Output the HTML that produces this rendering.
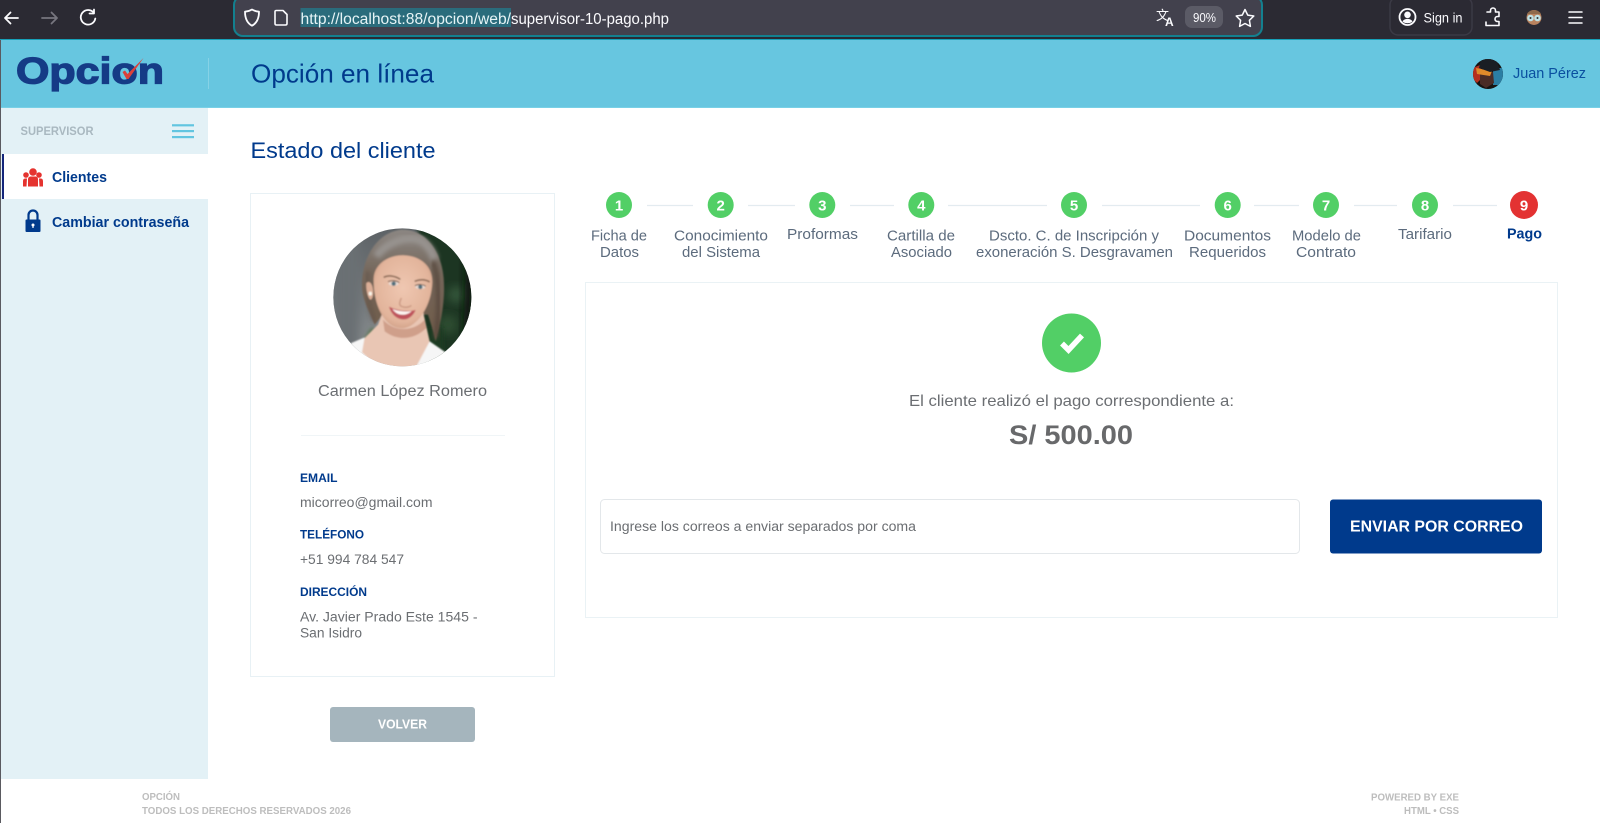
<!DOCTYPE html>
<html lang="es"><head><meta charset="utf-8"><title>Opción en línea</title>
<style>
html,body{margin:0;padding:0;width:1600px;height:823px;overflow:hidden;background:#fff}
svg{display:block}
text{font-family:"Liberation Sans",sans-serif}
.g{fill:#6b6e72}
.s{fill:#5c6b7d}
.b{fill:#003a8c;font-weight:700}
</style></head><body>
<svg width="1600" height="823" viewBox="0 0 1600 823" xmlns="http://www.w3.org/2000/svg">
<defs>
<clipPath id="cp"><circle cx="208" cy="208" r="207"/></clipPath>
<clipPath id="ca"><circle cx="1488" cy="74" r="15"/></clipPath>
<filter id="bl" x="-20%" y="-20%" width="140%" height="140%"><feGaussianBlur stdDeviation="6"/></filter>
<filter id="bl2" x="-30%" y="-30%" width="160%" height="160%"><feGaussianBlur stdDeviation="14"/></filter>
<filter id="bl3" x="-10%" y="-10%" width="120%" height="120%"><feGaussianBlur stdDeviation="2.200"/></filter>
<linearGradient id="gb" x1="0" y1="0" x2="0" y2="1"><stop offset="0" stop-color="#5d6266"/><stop offset=".55" stop-color="#767b7e"/><stop offset="1" stop-color="#93989a"/></linearGradient>
<linearGradient id="hr" x1="0" y1="0" x2="0" y2="1"><stop offset="0" stop-color="#8b8682"/><stop offset=".4" stop-color="#74665a"/><stop offset="1" stop-color="#6f5a48"/></linearGradient>
<radialGradient id="fc" cx=".5" cy=".45" r=".62"><stop offset="0" stop-color="#efc7b1"/><stop offset=".75" stop-color="#e2b49b"/><stop offset="1" stop-color="#c99880"/></radialGradient>
</defs>

<!-- browser toolbar -->
<rect width="1600" height="39" fill="#2b2a33"/>
<rect y="39" width="1600" height="1" fill="#17a0b8"/>
<rect x="234" y="-4" width="1028" height="40" rx="9" fill="#42414d" stroke="#13808f" stroke-width="2"/>
<g fill="none" stroke="#fbfbfe" stroke-width="1.800" stroke-linecap="round" stroke-linejoin="round">
<path d="M18 18H5M10.500 12.500 5 18l5.500 5.500"/>
<path d="M57 18H42M51.500 12.500 57 18l-5.500 5.500" stroke="#77767f"/>
<path d="M94 13.500V9.500M94 13.500h-4.500M94 13A7.300 7.300 0 1 0 95.300 18.500"/>
<path d="M252 9.500c2.500 1.500 4.500 2 7 2.200 0 6-1.500 11-7 14-5.500-3-7-8-7-14 2.500-.2 4.500-.7 7-2.200z"/>
<path d="M276.500 10.500h6.500l4 4v9c0 1-.5 1.500-1.500 1.500h-9c-1 0-1.500-.5-1.500-1.500v-12c0-1 .5-1 1.500-1z" stroke-width="1.600"/>
<path d="M1245 9.500l2.700 5.600 6.100.9-4.400 4.300 1 6.100-5.400-2.900-5.400 2.900 1-6.100-4.400-4.300 6.100-.9z" stroke-width="1.500"/>
<circle cx="1407.500" cy="17" r="8"/>
<path d="M1487 12h3.500v-1.500a2.500 2.500 0 0 1 5 0V12h3.500v4.500h-1.500a2.500 2.500 0 0 0 0 5h1.500v4h-13v-3.500" stroke-width="1.600"/>
<path d="M1569 12h13M1569 17.500h13M1569 23h13" stroke-width="1.500"/>
</g>
<circle cx="1407.500" cy="14.800" r="3.300" fill="#fbfbfe"/>
<path d="M1402.500 21.500c1-1.800 3-2.600 5-2.600s4 .8 5 2.600c-1.400 1.200-3.100 1.800-5 1.800s-3.600-.6-5-1.800z" fill="#fbfbfe"/>
<rect x="300.500" y="8" width="210.500" height="19" fill="#2a6c7c"/>
<text x="300.500" y="24" font-size="15.500" fill="#e6f4f6" textLength="210.500" lengthAdjust="spacingAndGlyphs">http://localhost:88/opcion/web/</text>
<text x="511" y="24" font-size="15.500" fill="#fbfbfe" textLength="158" lengthAdjust="spacingAndGlyphs">supervisor-10-pago.php</text>
<text x="1156" y="20" font-size="13" fill="#fbfbfe">文</text>
<text x="1165" y="26" font-size="12" font-weight="700" fill="#fbfbfe">A</text>
<rect x="1185" y="6" width="38" height="22" rx="7" fill="#5b5b66"/>
<text x="1193" y="22" font-size="12.500" fill="#fbfbfe" textLength="23" lengthAdjust="spacingAndGlyphs">90%</text>
<rect x="1390" y="-3" width="82" height="38" rx="8" fill="none" stroke="#3b3a45" stroke-width="1.500"/>
<text x="1423.500" y="22.500" font-size="14" fill="#fbfbfe" textLength="39" lengthAdjust="spacingAndGlyphs">Sign in</text>
<circle cx="1534" cy="17.500" r="7.500" fill="#b9835f"/>
<path d="M1527 14c2-5 12-5 14 0z" fill="#8e6a4c"/>
<circle cx="1530.500" cy="18" r="3.300" fill="#bfe2e6"/><circle cx="1537.500" cy="18" r="3.300" fill="#bfe2e6"/>
<circle cx="1530.500" cy="18" r="1" fill="#333"/><circle cx="1537.500" cy="18" r="1" fill="#333"/>

<!-- header -->
<rect y="40" width="1600" height="68" fill="#67c6e0"/>
<rect y="107" width="1600" height="1" fill="#78d0e6"/>
<text x="16" y="83.500" font-size="37" font-weight="700" fill="#153b86" stroke="#153b86" stroke-width="1.300" textLength="148" lengthAdjust="spacingAndGlyphs">Opcion</text>
<path d="M122.500 72L125 70.500L127.500 74L143.500 58L128.500 79L126.500 79z" fill="#d9403a"/>
<rect x="208" y="58" width="1" height="31" fill="#86d2e6"/>
<text x="251" y="82.500" font-size="26" fill="#003a8c" textLength="183" lengthAdjust="spacingAndGlyphs">Opción en línea</text>
<g clip-path="url(#ca)">
<rect x="1473" y="59" width="30" height="30" fill="#171311"/>
<path d="M1473 68l7-3 3 12-6 6-4-4z" fill="#b5301f"/>
<path d="M1493 68l10 0v17h-10z" fill="#2b7ea3"/>
<path d="M1480 74l13-2 1 11-8 5-6-4z" fill="#4a2c26"/>
<path d="M1476 68l16 3-2 5-13-2z" fill="#e08a2a"/>
<path d="M1481 59h15l4 11-10 2-11-4z" fill="#1a1e24"/>
</g>
<text x="1513" y="78" font-size="14.500" fill="#0a50a0" textLength="73" lengthAdjust="spacingAndGlyphs">Juan Pérez</text>

<!-- sidebar -->
<rect x="0" y="108" width="208" height="671" fill="#e3f1f6"/>
<rect x="0" y="40" width="1" height="783" fill="#5a5a60"/>
<text x="20.500" y="135" font-size="12" font-weight="700" fill="#a9b8c0" textLength="73" lengthAdjust="spacingAndGlyphs">SUPERVISOR</text>
<g fill="#62c5e0"><rect x="172" y="124.200" width="22" height="2.200"/><rect x="172" y="130" width="22" height="2.200"/><rect x="172" y="136" width="22" height="2.200"/></g>
<rect x="2" y="154" width="206" height="45" fill="#fff"/>
<rect x="2" y="154" width="2" height="45" fill="#14267a"/>
<g fill="#e5332f">
<circle cx="33" cy="172" r="3.800"/><circle cx="26" cy="175" r="2.800"/><circle cx="39" cy="175" r="2.800"/>
<path d="M28 186.500v-7c0-2 1-3 3-3h4c2 0 3 1 3 3v7z"/>
<path d="M23 186.500v-5c0-2 .7-3 2.500-3h1.500l-.5 8zM43 186.500v-5c0-2-.7-3-2.500-3H39l.5 8z"/>
</g>
<path d="M28.500 220v-5a4.500 4.500 0 0 1 9 0v5" fill="none" stroke="#003a8c" stroke-width="2.200"/>
<rect x="25.500" y="219.500" width="15" height="12.500" rx="1" fill="#003a8c"/>
<circle cx="33" cy="225" r="1.500" fill="#fff"/><rect x="32.400" y="225" width="1.200" height="3" fill="#fff"/>
<text x="52" y="182" font-size="14.500" font-weight="700" fill="#003a8c" textLength="55" lengthAdjust="spacingAndGlyphs">Clientes</text>
<text x="52" y="227" font-size="14.500" font-weight="700" fill="#003a8c" textLength="137" lengthAdjust="spacingAndGlyphs">Cambiar contraseña</text>

<!-- page title -->
<text x="250.500" y="158" font-size="22.500" fill="#003a8c" textLength="185" lengthAdjust="spacingAndGlyphs">Estado del cliente</text>

<!-- client card -->
<rect x="250.500" y="193.500" width="304" height="483" fill="#fff" stroke="#e8f1f5"/>
<g transform="translate(333,228) scale(.3333)"><g clip-path="url(#cp)">
<rect width="420" height="420" fill="url(#gb)"/>
<rect x="0" y="0" width="80" height="420" fill="#6a6f73" filter="url(#bl2)"/>
<rect x="255" y="-20" width="200" height="420" fill="#1f3622" filter="url(#bl)"/>
<circle cx="370" cy="200" r="26" fill="#35563a" filter="url(#bl2)"/>
<circle cx="345" cy="290" r="30" fill="#2e4e32" filter="url(#bl2)"/>
<path d="M400 60l30 60v200l-40 60z" fill="#0b120c" filter="url(#bl2)"/>
<path d="M250 300h80v70h-80z" fill="#1d3a20" filter="url(#bl)"/>
<path d="M90 345l25-45 35 20-30 35z" fill="#4d7040" filter="url(#bl)"/>
<g filter="url(#bl3)">
<path d="M88 190C80 110 120 15 205 5C280 3 325 70 332 150C338 220 322 290 308 340C300 310 295 290 285 260L150 260L125 290C108 250 92 220 88 190z" fill="url(#hr)"/>
<path d="M130 85c25-35 80-62 125-50 22 8 40 30 50 60" fill="none" stroke="#97938f" stroke-width="24" filter="url(#bl)"/>
<path d="M300 100c20 60 22 140 8 230" fill="none" stroke="#54453a" stroke-width="12" filter="url(#bl)"/>
<path d="M104 130c-6 55 2 100 20 150" fill="none" stroke="#62534a" stroke-width="8" filter="url(#bl)"/>
<path d="M95 330l40-40 15-40h120l10 45 10 45 45 35v60H60z" fill="#e9c6b4"/>
<path d="M150 275c35 40 95 35 125 0l5 25c-35 35-85 40-125 10z" fill="#cf9f8a"/>
<path d="M122 150C125 105 170 80 215 82C265 85 300 115 298 165C295 220 270 270 235 292C215 305 190 303 170 288C140 265 120 210 122 150z" fill="url(#fc)"/>
<path d="M100 165c8-8 18 0 20 20 2 18-2 30-8 30-8-5-14-35-12-50z" fill="#dcae97"/>
<path d="M55 345l40-17-8 45 55 50H30zM290 340l48 33-70 50h-22z" fill="#f6f6f6"/>
<ellipse cx="112" cy="197" rx="5" ry="6" fill="#fbf7ec"/>
<path d="M152 148c15-8 35-4 50 6M245 160c15-6 32-6 45 2" fill="none" stroke="#84634f" stroke-width="4.500"/>
<ellipse cx="182" cy="167" rx="15" ry="6" fill="#e9dcd5"/>
<ellipse cx="262" cy="177" rx="15" ry="6" fill="#e9dcd5"/>
<circle cx="182" cy="167" r="6.500" fill="#4f6e7c"/>
<circle cx="262" cy="177" r="6.500" fill="#4f6e7c"/>
<path d="M165 161c10-5 25-4 34 3M246 173c10-5 25-4 32 2" fill="none" stroke="#4a372d" stroke-width="2.500"/>
<path d="M205 210c-5 12-8 20 0 25 10 5 25 3 30-3" fill="none" stroke="#c99680" stroke-width="4"/>
<path d="M168 236c25 12 55 16 80 10-8 18-22 30-40 28-20-2-34-18-40-38z" fill="#bf525b"/>
<path d="M178 243c20 7 40 9 58 6-8 8-18 12-30 11-12-1-21-7-28-17z" fill="#fdf6f2"/>
</g>
</g></g>
<text x="318" y="396" font-size="15.500" class="g" textLength="169" lengthAdjust="spacingAndGlyphs">Carmen López Romero</text>
<rect x="301" y="435" width="204" height="1" fill="#f0f5f7"/>
<text x="300" y="482" font-size="12" class="b" textLength="37.500" lengthAdjust="spacingAndGlyphs">EMAIL</text>
<text x="300" y="507" font-size="13.500" class="g" textLength="132.500" lengthAdjust="spacingAndGlyphs">micorreo@gmail.com</text>
<text x="300" y="538.500" font-size="12" class="b" textLength="64" lengthAdjust="spacingAndGlyphs">TELÉFONO</text>
<text x="300" y="564" font-size="13.500" class="g" textLength="104" lengthAdjust="spacingAndGlyphs">+51 994 784 547</text>
<text x="300" y="596" font-size="12" class="b" textLength="67" lengthAdjust="spacingAndGlyphs">DIRECCIÓN</text>
<text x="300" y="621.500" font-size="13.500" class="g" textLength="177.500" lengthAdjust="spacingAndGlyphs">Av. Javier Prado Este 1545 -</text>
<text x="300" y="637.500" font-size="13.500" class="g" textLength="62" lengthAdjust="spacingAndGlyphs">San Isidro</text>
<rect x="330" y="707" width="145" height="35" rx="3" fill="#a5b5bd"/>
<text x="378" y="728.500" font-size="12.500" font-weight="700" fill="#fff" textLength="49" lengthAdjust="spacingAndGlyphs">VOLVER</text>

<!-- stepper -->
<g stroke="#e3ebf0" stroke-width="1.200">
<path d="M647 205.500h46M748 205.500h47M850 205.500h44M948 205.500h99M1102 205.500h98M1254 205.500h45M1354 205.500h43M1453 205.500h44"/>
</g>
<g fill="#52cf66">
<circle cx="619" cy="205" r="13"/><circle cx="720.700" cy="205" r="13"/><circle cx="822.300" cy="205" r="13"/><circle cx="921.300" cy="205" r="13"/><circle cx="1074" cy="205" r="13"/><circle cx="1227.700" cy="205" r="13"/><circle cx="1326" cy="205" r="13"/><circle cx="1425" cy="205" r="13"/>
</g>
<circle cx="1524" cy="205" r="14" fill="#e33232"/>
<g font-size="15" font-weight="700" fill="#fff" text-anchor="middle">
<text x="619" y="210.500">1</text><text x="720.700" y="210.500">2</text><text x="822.300" y="210.500">3</text><text x="921.300" y="210.500">4</text><text x="1074" y="210.500">5</text><text x="1227.700" y="210.500">6</text><text x="1326" y="210.500">7</text><text x="1425" y="210.500">8</text><text x="1524" y="210.500">9</text>
</g>
<g font-size="14.500" class="s">
<text x="591" y="240.500" textLength="56" lengthAdjust="spacingAndGlyphs">Ficha de</text>
<text x="600" y="257" textLength="39" lengthAdjust="spacingAndGlyphs">Datos</text>
<text x="674" y="240.500" textLength="94" lengthAdjust="spacingAndGlyphs">Conocimiento</text>
<text x="682" y="257" textLength="78" lengthAdjust="spacingAndGlyphs">del Sistema</text>
<text x="787" y="239" textLength="71" lengthAdjust="spacingAndGlyphs">Proformas</text>
<text x="887" y="240.500" textLength="68" lengthAdjust="spacingAndGlyphs">Cartilla de</text>
<text x="891" y="257" textLength="61" lengthAdjust="spacingAndGlyphs">Asociado</text>
<text x="989" y="240.500" textLength="170" lengthAdjust="spacingAndGlyphs">Dscto. C. de Inscripción y</text>
<text x="976" y="257" textLength="197" lengthAdjust="spacingAndGlyphs">exoneración S. Desgravamen</text>
<text x="1184" y="240.500" textLength="87" lengthAdjust="spacingAndGlyphs">Documentos</text>
<text x="1189" y="257" textLength="77" lengthAdjust="spacingAndGlyphs">Requeridos</text>
<text x="1292" y="240.500" textLength="69" lengthAdjust="spacingAndGlyphs">Modelo de</text>
<text x="1296" y="257" textLength="60" lengthAdjust="spacingAndGlyphs">Contrato</text>
<text x="1398" y="239" textLength="54" lengthAdjust="spacingAndGlyphs">Tarifario</text>
</g>
<text x="1507" y="238.500" font-size="15" class="b" textLength="35" lengthAdjust="spacingAndGlyphs">Pago</text>

<!-- payment box -->
<rect x="585.500" y="282.500" width="972" height="335" fill="#fff" stroke="#eaf2f5"/>
<circle cx="1071.500" cy="343" r="29.500" fill="#52cf66"/>
<path d="M1062 343.500l6.500 6.500 13.500-14.500" fill="none" stroke="#fff" stroke-width="5.500"/>
<text x="909" y="406" font-size="16" class="g" textLength="325" lengthAdjust="spacingAndGlyphs">El cliente realizó el pago correspondiente a:</text>
<text x="1009" y="444" font-size="27" font-weight="700" fill="#68696b" textLength="124" lengthAdjust="spacingAndGlyphs">S/ 500.00</text>
<rect x="600.500" y="499.500" width="699" height="54" rx="4" fill="#fff" stroke="#e3e7ea"/>
<text x="610" y="531" font-size="13.500" class="g" textLength="306" lengthAdjust="spacingAndGlyphs">Ingrese los correos a enviar separados por coma</text>
<rect x="1330" y="499.500" width="212" height="54" rx="3" fill="#003a8c"/>
<text x="1350" y="531.500" font-size="16" font-weight="700" fill="#fff" textLength="173" lengthAdjust="spacingAndGlyphs">ENVIAR POR CORREO</text>

<!-- footer -->
<g font-size="10" font-weight="700" fill="#bdbdbd">
<text x="142" y="800" textLength="38" lengthAdjust="spacingAndGlyphs">OPCIÓN</text>
<text x="142" y="814" textLength="209" lengthAdjust="spacingAndGlyphs">TODOS LOS DERECHOS RESERVADOS 2026</text>
<text x="1371" y="800.500" textLength="88" lengthAdjust="spacingAndGlyphs">POWERED BY EXE</text>
<text x="1404" y="814" textLength="55" lengthAdjust="spacingAndGlyphs">HTML • CSS</text>
</g>
</svg>
</body></html>
